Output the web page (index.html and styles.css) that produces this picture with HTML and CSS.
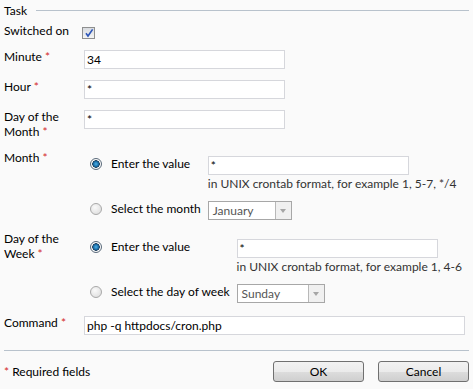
FILE: index.html
```html
<!DOCTYPE html>
<html lang="en">
<head>
    <meta charset="UTF-8">
    <title>Task</title>
    <link rel="stylesheet" href="styles.css">
</head>
<body>
    <div class="section-title">
        <span>Task</span>
        <span class="rule"></span>
    </div>

    <div class="form-row switch-row">
        <div class="field-label">Switched on</div>
        <div class="field">
            <span class="checkbox">
                <svg width="10" height="10" viewBox="0 0 10 10">
                    <path d="M2 5.2 L4 8 L8.6 1.4" fill="none" stroke="#2c55b8" stroke-width="1.6"/>
                </svg>
            </span>
        </div>
    </div>

    <div class="form-row">
        <div class="field-label">Minute <span class="req">*</span></div>
        <div class="field"><div class="input">34</div></div>
    </div>

    <div class="form-row">
        <div class="field-label">Hour <span class="req">*</span></div>
        <div class="field"><div class="input">*</div></div>
    </div>

    <div class="form-row">
        <div class="field-label">Day of the<br>Month <span class="req">*</span></div>
        <div class="field"><div class="input">*</div></div>
    </div>

    <!-- month: value or list -->
    <div class="form-row group-row">
        <div class="field-label">Month <span class="req">*</span></div>
        <table class="choice">
            <tr>
                <td class="radio-cell"><span class="radio checked"></span></td>
                <td class="choice-text">Enter the value</td>
                <td>
                    <div class="input">*</div>
                    <div class="hint">in UNIX crontab format, for example 1, 5-7, */4</div>
                </td>
            </tr>
            <tr>
                <td class="radio-cell"><span class="radio"></span></td>
                <td class="choice-text">Select the month</td>
                <td><div class="select month-select"><span>January</span><span class="arrow"></span></div></td>
            </tr>
        </table>
    </div>

    <!-- day of week: value or list -->
    <div class="form-row group-row">
        <div class="field-label">Day of the<br>Week <span class="req">*</span></div>
        <table class="choice week-choice">
            <tr>
                <td class="radio-cell"><span class="radio checked"></span></td>
                <td class="choice-text">Enter the value</td>
                <td>
                    <div class="input">*</div>
                    <div class="hint">in UNIX crontab format, for example 1, 4-6</div>
                </td>
            </tr>
            <tr>
                <td class="radio-cell"><span class="radio"></span></td>
                <td class="choice-text">Select the day of week</td>
                <td><div class="select week-select"><span>Sunday</span><span class="arrow"></span></div></td>
            </tr>
        </table>
    </div>

    <div class="form-row command-row">
        <div class="field-label">Command <span class="req">*</span></div>
        <div class="field"><div class="input wide">php -q httpdocs/cron.php</div></div>
    </div>

    <div class="footer">
        <div class="required-note"><span class="req">*</span> Required fields</div>
        <div class="buttons">
            <button class="btn">OK</button>
            <button class="btn">Cancel</button>
        </div>
    </div>
</body>
</html>
```

FILE: styles.css
```css
body {
    margin: 0;
    padding: 0 4px;
    background-color: #fafafa;
    font-family: Lato, "Noto Sans", sans-serif;
    font-size: 12px;
    line-height: 15px;
    color: #000;
}

.section-title {
    display: flex;
    align-items: center;
    height: 20px;
}

.section-title .rule {
    flex: 1;
    height: 1px;
    margin-left: 9px;
    background-color: #b8c2cc;
}

.form-row {
    display: flex;
    align-items: flex-start;
    margin-top: 10px;
}

.switch-row {
    margin-top: 3px;
    margin-bottom: 4px;
}

.field-label {
    width: 80px;
    flex-shrink: 0;
}

.req {
    color: #d42a2a;
}

.field {
    flex: 1;
    padding-top: 1px;
}

.checkbox {
    display: block;
    box-sizing: border-box;
    width: 13px;
    height: 12px;
    margin-top: 3px;
    margin-left: -2px;
    border: 1px solid #8e8f8f;
    background: linear-gradient(#d8dbe0, #f4f4f4);
    position: relative;
}

.checkbox svg {
    position: absolute;
    left: 1px;
    top: 0;
}

.input {
    box-sizing: border-box;
    width: 201px;
    height: 19px;
    padding: 2px 2px;
    border: 1px solid #d6d7dc;
    background-color: #fff;
    line-height: 14px;
}

.input.wide {
    width: 381px;
}

.choice {
    border-collapse: collapse;
    margin-top: 6px;
}

.week-choice {
    margin-top: 8px;
}

.choice td {
    padding: 0;
    vertical-align: top;
}

.choice .radio-cell {
    width: 21px;
    padding-left: 6px;
}

.choice .choice-text {
    padding-right: 7px;
    white-space: nowrap;
}

.radio {
    display: block;
    box-sizing: border-box;
    width: 12px;
    height: 12px;
    margin-top: 2px;
    border-radius: 50%;
    border: 1px solid #a9a9a9;
    background: radial-gradient(circle at 40% 35%, #fafafa, #d9d9d9);
}

.radio.checked {
    border-color: #5a6a7a;
    background: radial-gradient(circle, #4fb1e8 0, #1a6ea8 2.5px, #1b3d5c 3.5px, #ffffff 4px, #ececec 6px);
}

.hint {
    width: 0;
    margin-top: 1px;
    margin-bottom: 10px;
    color: #333;
    white-space: nowrap;
}

.select {
    display: flex;
    box-sizing: border-box;
    height: 19px;
    border: 1px solid #a7a7a7;
    background-color: #fff;
    color: #555;
    line-height: 17px;
    padding-left: 4px;
}

.select span:first-child {
    flex: 1;
}

.month-select {
    width: 84px;
}

.week-select {
    width: 88px;
}

.select .arrow {
    box-sizing: border-box;
    width: 16px;
    height: 17px;
    border-left: 1px solid #b8b8b8;
    background-color: #f0f0f0;
    position: relative;
}

.select .arrow::after {
    content: "";
    position: absolute;
    left: 4px;
    top: 7px;
    border-left: 3.5px solid transparent;
    border-right: 3.5px solid transparent;
    border-top: 4px solid #a5a5a5;
}

.group-row {
    margin-top: 11px;
}

.command-row {
    margin-top: 12px;
}

.footer {
    display: flex;
    align-items: center;
    justify-content: space-between;
    margin-top: 15px;
    padding-top: 10px;
    border-top: 1px solid #b8c2cc;
}

.buttons {
    display: flex;
    gap: 14px;
}

.btn {
    width: 91px;
    height: 21px;
    padding: 0;
    border: 1px solid #707070;
    border-radius: 3px;
    background: linear-gradient(#f2f2f2 0, #ebebeb 50%, #dddddd 51%, #cfcfcf 100%);
    font-family: Lato, "Noto Sans", sans-serif;
    font-size: 12px;
    color: #000;
}
```
